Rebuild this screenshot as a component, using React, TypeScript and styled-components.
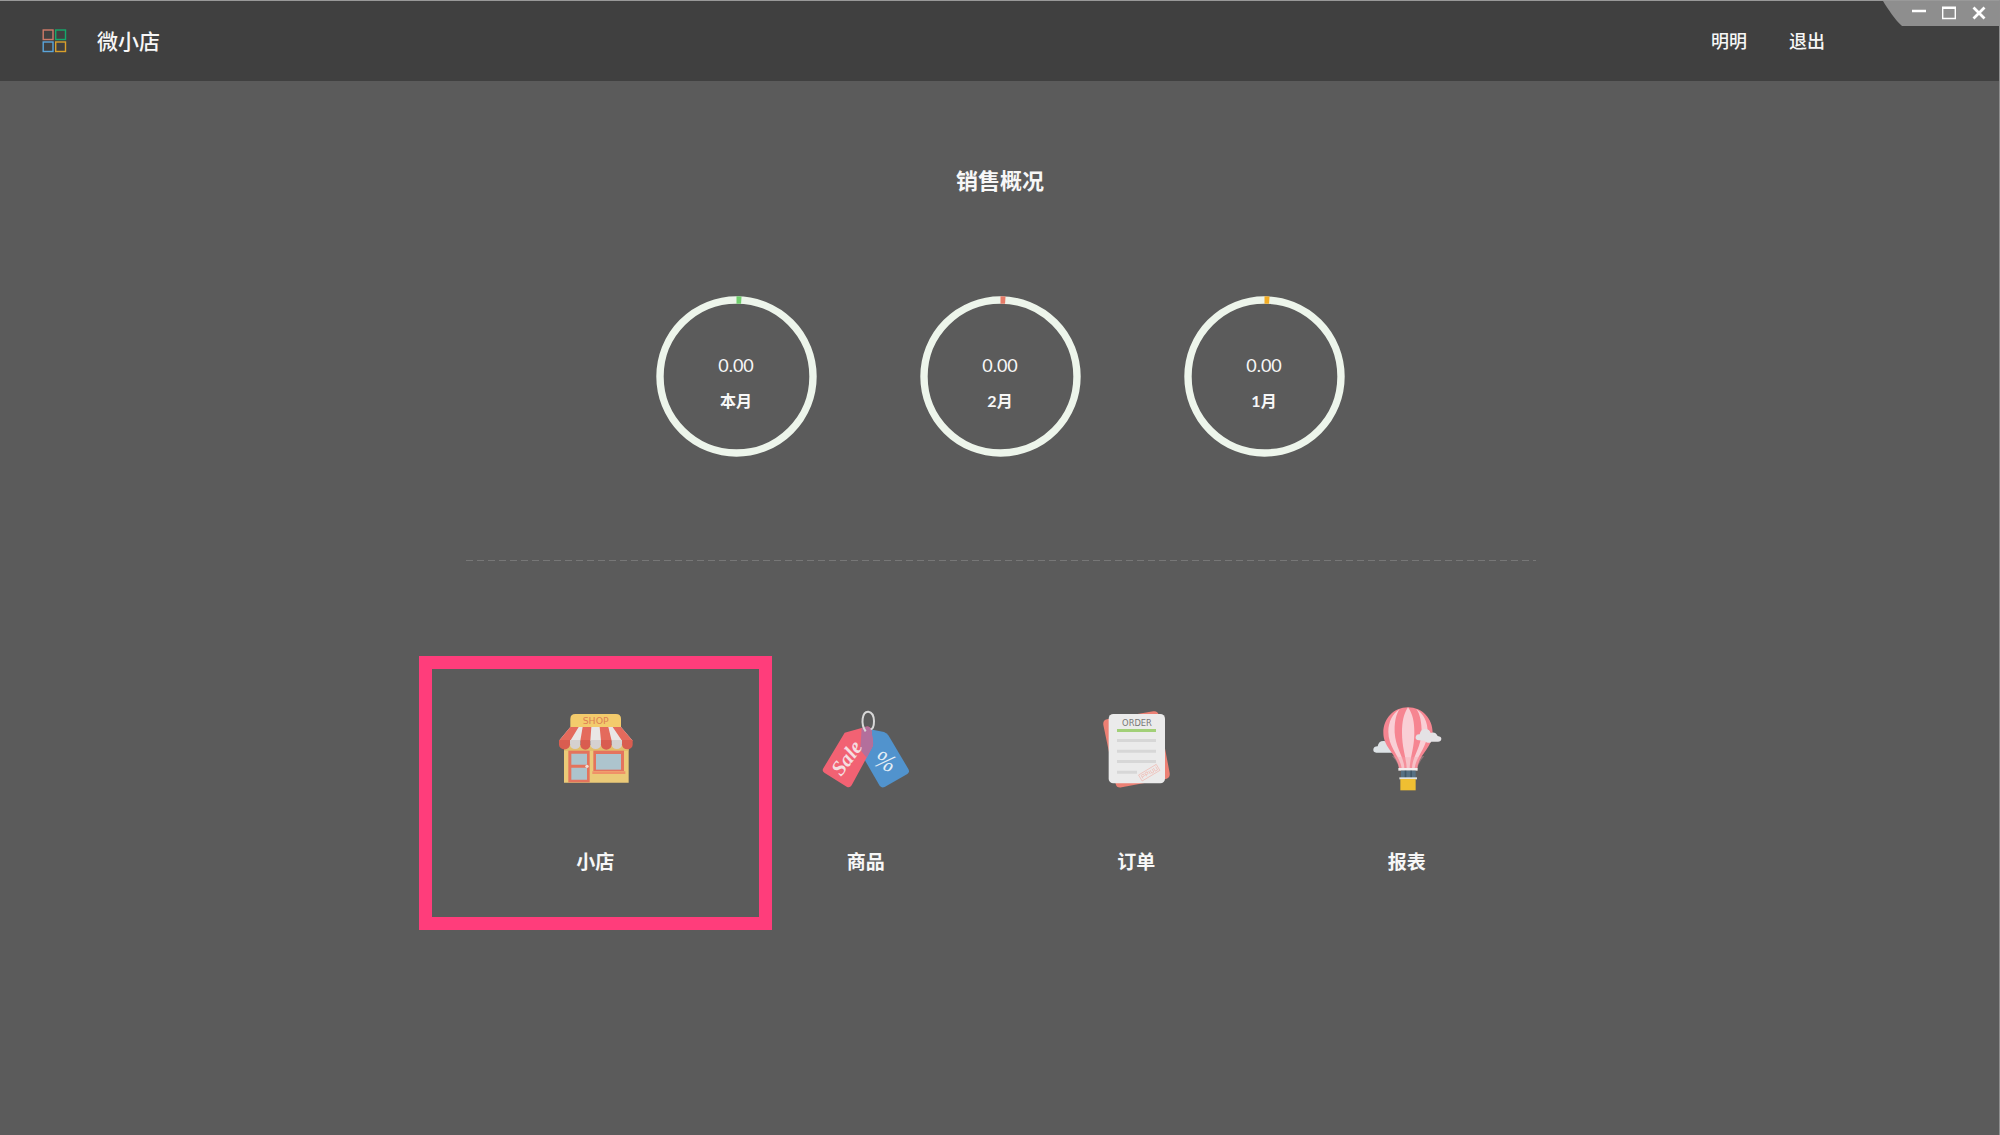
import React from "react";
import styled, { createGlobalStyle } from "styled-components";

const GlobalStyle = createGlobalStyle`
  * { box-sizing: border-box; }
  body {
    margin: 0;
    background: #5b5b5b;
    color: #f7f7f7;
    font-family: Lato, "Noto Sans CJK SC", sans-serif;
  }
  button { font: inherit; color: inherit; background: none; border: 0; padding: 0; cursor: pointer; }
  a { color: inherit; text-decoration: none; }
`;

const Page = styled.div`
  min-height: 100vh;
  box-shadow: inset -1px 0 #8f8f8f;
`;

const Header = styled.header`
  display: flex;
  align-items: center;
  height: 81px;
  padding-left: 42px;
  background: #404040;
  border-top: 1px solid #999999;
  border-right: 1px solid #8f8f8f;
`;

const Brand = styled.h1`
  flex: 1;
  margin: 0 0 0 30px;
  font-size: 21px;
  line-height: 32px;
  font-weight: 500;
`;

const Account = styled.nav`
  display: flex;
  gap: 42px;
  margin-right: 58px;
  font-size: 18px;
  line-height: 24px;
  font-weight: 500;
`;

const WindowControls = styled.div`
  display: flex;
  align-self: flex-start;
  justify-content: flex-end;
  gap: 6px;
  width: 116px;
  height: 25px;
  padding-right: 8px;
  background: #8e8e8e;
  clip-path: path("M0 0 H116 V25 H19 C12 19 5 8 0 0 Z");
`;

const WindowButton = styled.button`
  display: grid;
  place-items: center;
  width: 24px;
  height: 24px;
`;

const Main = styled.main`
  display: flex;
  flex-direction: column;
  align-items: center;
  padding: 84px 24px 160px;
`;

const Heading = styled.h2`
  margin: 0;
  font-size: 22px;
  line-height: 32px;
  font-weight: 700;
`;

const Rings = styled.ul`
  display: flex;
  gap: 103px;
  margin: 99px 0 103px;
  padding: 0;
  list-style: none;
`;

const RingItem = styled.li`
  display: grid;
  width: 161px;
  height: 161px;
  > * { grid-area: 1 / 1; }
`;

const RingText = styled.div`
  display: flex;
  flex-direction: column;
  align-items: center;
  justify-content: center;
  gap: 12px;
  padding-top: 12px;
`;

const Amount = styled.span`
  font-size: 18px;
  line-height: 24px;
`;

const Month = styled.span`
  font-size: 16px;
  line-height: 24px;
  font-weight: 700;
`;

const Lower = styled.div`
  display: flex;
  flex-direction: column;
  align-items: center;
  width: 100%;
  padding-left: 2px;
`;

const Divider = styled.hr`
  width: 100%;
  max-width: 1070px;
  height: 1px;
  margin: 0 0 139px;
  border: 0;
  background: repeating-linear-gradient(90deg, #777777 0 7px, transparent 7px 11px);
`;

const Menu = styled.nav`
  display: grid;
  grid-template-columns: repeat(4, 1fr);
  width: 100%;
  max-width: 1082px;
`;

const MenuLink = styled.a<{ $active?: boolean }>`
  position: relative;
  display: flex;
  flex-direction: column;
  align-items: center;
  gap: 38px;
  font-size: 19px;
  line-height: 48px;
  font-weight: 700;
  &::after {
    content: "";
    display: ${(p) => (p.$active ? "block" : "none")};
    position: absolute;
    inset: -44px -41px;
    border: 13px solid #ff3d7b;
  }
`;

const Logo = () => (
  <svg width="25" height="24" viewBox="0 0 25 24" fill="none" strokeWidth="1.4" aria-hidden="true">
    <rect x="1.2" y="1" width="9.8" height="9.5" stroke="#d07a68" />
    <rect x="13.7" y="1" width="9.8" height="9.5" stroke="#14a86b" />
    <rect x="1.2" y="13" width="9.8" height="9.5" stroke="#5ba5da" />
    <rect x="13.7" y="13" width="9.8" height="9.5" stroke="#d9a02c" />
  </svg>
);

const Ring = ({ color }: { color: string }) => (
  <svg width="161" height="161" viewBox="0 0 161 161" fill="none" strokeWidth="7.4" aria-hidden="true">
    <circle cx="80.5" cy="80.5" r="76.5" stroke="#edf5eb" />
    <path d="M80.500 4 A76.500 76.500 0 0 1 85.300 4.150" stroke={color} />
  </svg>
);

const ShopIcon = () => (
  <svg width="110" height="100" viewBox="0 0 330 300" aria-hidden="true">
    <path d="M91 84V57q0-15 15-15H228q15 0 15 15V84Z" fill="#f3cb6c" />
    <text x="167" y="71" textAnchor="middle" fontFamily="DejaVu Sans, sans-serif" fontSize="28" fontWeight="400" fill="#dd8055">SHOP</text>
    <path d="M72 135H266V248H72Z" fill="#ebca78" />
    <path d="M72 142H266V153H72Z" fill="#d9b464" opacity=".55" />
    <path d="M85 152H149V247H85Z" fill="#e4735d" />
    <path d="M94 161H141V194H94ZM94 203H141V239H94Z" fill="#adc4cd" />
    <circle cx="141" cy="199" r="5" fill="#f4dfd6" />
    <path d="M160 152H252V213H160Z" fill="#e4735d" />
    <path d="M168 162H243V209H168Z" fill="#adc4cd" />
    <path d="M157 214H256V222H157Z" fill="#f09168" />
    <path d="M91 81H243L278 122H57Z" fill="#e9e6e5" />
    <path d="M91 81H116L91 122H57ZM128 81H154L151 122H121ZM179 81H205L215 122H183ZM218 81H243L278 122H246Z" fill="#e46a5c" />
    <path d="M57 120H90V134a16 14 0 0 1-33 0ZM121 120H151V135a15 14 0 0 1-30 0ZM183 120H215V135a16 14 0 0 1-32 0ZM246 120H278V134a16 14 0 0 1-32 0Z" fill="#d95d50" />
    <path d="M90 120H121V133a15.500 14 0 0 1-31 0ZM151 120H183V133a16 14 0 0 1-32 0ZM215 120H246V133a15.500 14 0 0 1-31 0Z" fill="#d5d1d0" />
  </svg>
);

const TagsIcon = () => (
  <svg width="110" height="100" viewBox="3 0 330 300" aria-hidden="true">
    <path d="M180 88L222 96Q231 99 236 107L295 207Q300 216 292 222L224 261Q215 265 209 257L151 157V130Z" fill="#5193cd" />
    <path d="M104 98L168 80Q179 77 184 89L189 126Q191 136 185 145L125 256Q119 265 110 260L43 218Q35 213 40 205Z" fill="#f26273" />
    <path d="M155 84L168 80Q179 77 184 89L189 126Q191 136 185 145L170 173L151 150Z" fill="#b36f9c" />
    <path d="M167 94Q155 77 158 56Q161 34 175 35Q191 37 192 63Q192 86 182 88" fill="none" stroke="#d8d8d8" strokeWidth="6" />
    <text x="127" y="186" transform="rotate(-54 127 186)" textAnchor="middle" fontFamily="Liberation Serif, serif" fontStyle="italic" fontWeight="700" fontSize="63" fill="#f5dde0">Sale</text>
    <text x="216" y="207" transform="rotate(24 216 207)" textAnchor="middle" fontFamily="Liberation Serif, serif" fontStyle="italic" fontWeight="400" fontSize="74" fill="#e4eef6">%</text>
  </svg>
);

const OrderIcon = () => (
  <svg width="110" height="100" viewBox="-27 0 330 300" aria-hidden="true">
    <path d="M51 58L190 34Q203 32 206 45L239 219Q241 234 228 237L95 262Q80 265 77 252L40 75Q38 61 51 58Z" fill="#ec8074" />
    <rect x="56" y="42" width="169" height="208" rx="14" fill="#ebebeb" />
    <text x="141" y="79" textAnchor="middle" fontFamily="DejaVu Sans, sans-serif" fontSize="25" fontWeight="400" fill="#777777">ORDER</text>
    <path d="M81 87H198V96H81Z" fill="#a2d078" />
    <path d="M81 117H198V126H81ZM81 149H198V158H81ZM81 180H198V189H81ZM81 212H141V221H81Z" fill="#d7d7d7" />
    <g transform="rotate(-31 177 219)" fill="none" stroke="#f0b8b0">
      <rect x="147" y="208" width="62" height="21" strokeWidth="2" />
      <path d="M153 224V213H161V219H153M166 224V213H174V219H166M179 213V224M184 213V224H191V213M196 213V224H204V213" strokeWidth="2" />
    </g>
  </svg>
);

const BalloonIcon = () => (
  <svg width="110" height="100" viewBox="-25 0 330 300" aria-hidden="true">
    <path d="M48 158Q38 158 39 148Q40 139 52 139Q55 123 69 123Q77 122 83 128L105 158Z" fill="#dde3e6" />
    <path d="M143 22C100 22 69 56 69 98C69 144 111 163 116 205H171C175 163 217 143 217 98C217 56 186 22 143 22Z" fill="#f68591" />
    <path d="M118 27C96 41 84 66 84 95C84 142 119 168 124 205H132C132 172 106 145 103 98C102 67 107 42 118 27ZM168 27C190 41 202 66 202 95C202 142 167 168 163 205H155C155 172 181 145 184 98C184 67 179 42 168 27ZM143 22C130 41 125 66 125 98C125 145 138 172 139 205H148C149 172 162 145 162 98C162 66 157 41 143 22Z" fill="#f9cfd5" />
    <path d="M95 168Q143 176 192 168Q176 186 171 205H116Q112 185 95 168Z" fill="#f4a5ae" opacity=".35" />
    <path d="M176 121Q164 120 166 110Q168 102 178 103Q181 88 193 87Q207 86 211 99Q225 94 232 108Q244 110 243 117Q242 125 233 125H213Q209 130 202 128Q195 127 194 122Z" fill="#e4e2e5" />
    <path d="M114 204H172V212H114Z" fill="#f2eeee" />
    <path d="M122 212H166V234H122Z" fill="#567082" />
    <path d="M133 212H138V234H133ZM150 212H155V234H150Z" fill="#405665" />
    <path d="M117 232H170V238H117Z" fill="#e0e2df" />
    <path d="M120 237H166V271H120Z" fill="#efbf32" />
  </svg>
);

const months = [
  { label: "本月", amount: "0.00", color: "#70cf6d" },
  { label: "2月", amount: "0.00", color: "#e87b68" },
  { label: "1月", amount: "0.00", color: "#f3ad25" },
];

const entries = [
  { label: "小店", Icon: ShopIcon, active: true },
  { label: "商品", Icon: TagsIcon },
  { label: "订单", Icon: OrderIcon },
  { label: "报表", Icon: BalloonIcon },
];

export default function App() {
  return (
    <Page>
      <GlobalStyle />
      <Header>
        <Logo />
        <Brand>微小店</Brand>
        <Account>
          <a href="#account">明明</a>
          <button type="button">退出</button>
        </Account>
        <WindowControls>
          <WindowButton type="button" aria-label="最小化">
            <svg width="14" height="14" viewBox="0 0 14 14" stroke="#fff" strokeWidth="2.4"><path d="M0 5H14" /></svg>
          </WindowButton>
          <WindowButton type="button" aria-label="最大化">
            <svg width="14" height="14" viewBox="0 0 14 14" stroke="#fff" fill="none"><path d="M.7 1V12.500H13.300V1" strokeWidth="1.4" /><path d="M0 1.800H14" strokeWidth="2.4" /></svg>
          </WindowButton>
          <WindowButton type="button" aria-label="关闭">
            <svg width="14" height="14" viewBox="0 0 14 14" stroke="#fff" strokeWidth="2.8"><path d="M1.500 1.500L12.500 12.500M12.500 1.500L1.500 12.500" /></svg>
          </WindowButton>
        </WindowControls>
      </Header>
      <Main>
        <Heading>销售概况</Heading>
        <Rings>
          {months.map((m) => (
            <RingItem key={m.label}>
              <Ring color={m.color} />
              <RingText>
                <Amount>{m.amount}</Amount>
                <Month>{m.label}</Month>
              </RingText>
            </RingItem>
          ))}
        </Rings>
        <Lower>
          <Divider />
          <Menu>
            {entries.map(({ label, Icon, active }) => (
              <MenuLink key={label} href="#" $active={active}>
                <Icon />
                {label}
              </MenuLink>
            ))}
          </Menu>
        </Lower>
      </Main>
    </Page>
  );
}
